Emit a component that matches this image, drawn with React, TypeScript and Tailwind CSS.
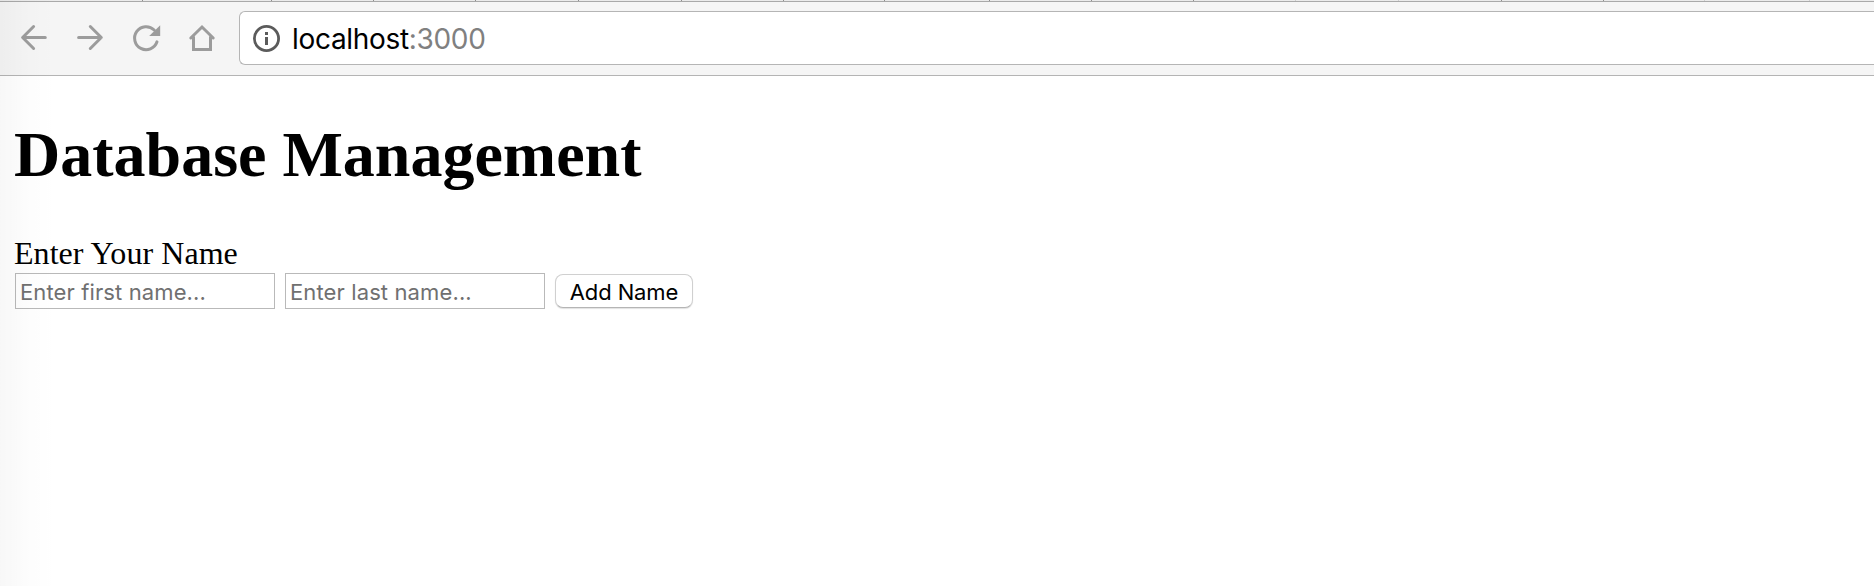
const tabEdges = [
  { left: 142, soft: false }, { left: 271, soft: false }, { left: 373, soft: false },
  { left: 475, soft: false }, { left: 578, soft: false }, { left: 681, soft: false },
  { left: 783, soft: false }, { left: 884, soft: false }, { left: 989, soft: false },
  { left: 1091, soft: false }, { left: 1193, soft: false }, { left: 1295, soft: true },
  { left: 1398, soft: true }, { left: 1501, soft: false }, { left: 1603, soft: false },
  { left: 1704, soft: true }, { left: 1809, soft: true },
];

function TabStrip() {
  return (
    <div className="relative h-[2px] shrink-0 border-b border-[#a9a9a9] bg-[#ebebeb]">
      {tabEdges.map(({ left, soft }) => (
        <i key={left} className={soft ? "absolute top-0 h-px w-px bg-[#cfcfcf]" : "absolute top-0 h-px w-px bg-[#8f8f8f]"} style={{ left }} />
      ))}
    </div>
  );
}

function NavIcons() {
  return (
    <svg className="block h-[73px] w-[239px] shrink-0" viewBox="0 2 239 73" fill="none" stroke="#9c9c9c" strokeWidth="3" strokeLinecap="round" strokeLinejoin="round">
      <path d="M45.3 37.5H23M33.6 26.5L22.6 37.5L33.6 48.5" />
      <path d="M78.6 37.5H101M90.3 26.5L101.3 37.5L90.3 48.5" />
      <path d="M154.2 30A11.5 11.5 0 1 0 157 41.8" />
      <path d="M160.2 25.3V36H149.2Z" fill="#9c9c9c" stroke="none" />
      <path d="M190.8 38L202 27L213.2 38M193.5 37V49.5H210.5V37" strokeLinejoin="miter" />
    </svg>
  );
}

function Toolbar() {
  return (
    <div className="flex h-[74px] shrink-0 border-b border-[#b4b4b4] bg-[#f5f5f5]">
      <NavIcons />
      <div className="mt-[9px] flex h-[54px] grow items-center rounded-l-[6px] border border-r-0 border-[#b5b5b5] bg-white pl-[12px]">
        <svg className="size-[28px] shrink-0" viewBox="0 0 28 28">
          <circle cx="14.5" cy="14.5" r="12.1" fill="none" stroke="#5b5b5b" strokeWidth="2.8" />
          <path d="M13 8h3v3h-3zM13 13h3v8h-3z" fill="#5b5b5b" />
        </svg>
        <p className="ml-[12px] pt-[2px] font-['Inter',sans-serif] text-[28px] leading-[34px] tracking-[-0.32px] text-black">
          localhost<span className="text-[#808080]">:3000</span>
        </p>
      </div>
    </div>
  );
}

const inputClass =
  "h-[36px] w-[260px] border border-[#b9b9b9] bg-white pt-[2px] pl-[4px] font-['Inter',sans-serif] text-[22px] tracking-[0.12px] text-black outline-none placeholder:text-[#707070]";

export default function App() {
  return (
    <div className="relative flex h-[586px] w-full flex-col overflow-hidden bg-white">
      <TabStrip />
      <Toolbar />
      <main className="pl-[14px] pt-[42px] font-['Liberation_Serif',serif] text-black">
        <h1 className="text-[64px] font-bold leading-[73px]">Database Management</h1>
        <p className="mt-[43px] mb-px text-[32px] leading-[38px] tracking-[0.05px]">Enter Your Name</p>
        <form className="ml-px flex items-start" onSubmit={(e) => e.preventDefault()}>
          <input className={inputClass} placeholder="Enter first name..." />
          <input className={inputClass + " ml-[10px]"} placeholder="Enter last name..." />
          <button className="ml-[10px] mt-px h-[34px] w-[138px] rounded-[8px] border border-[#d0d0d0] border-b-[#b5b5b5] bg-white pt-px font-['Inter',sans-serif] text-[22px] leading-[32px] tracking-[-0.12px] whitespace-nowrap text-black shadow-[0_1px_1px_rgba(0,0,0,0.12)]">
            Add Name
          </button>
        </form>
      </main>
      <div className="pointer-events-none absolute inset-y-0 left-0 w-[56px] bg-linear-to-r from-black/3 via-black/1 to-transparent" />
    </div>
  );
}
